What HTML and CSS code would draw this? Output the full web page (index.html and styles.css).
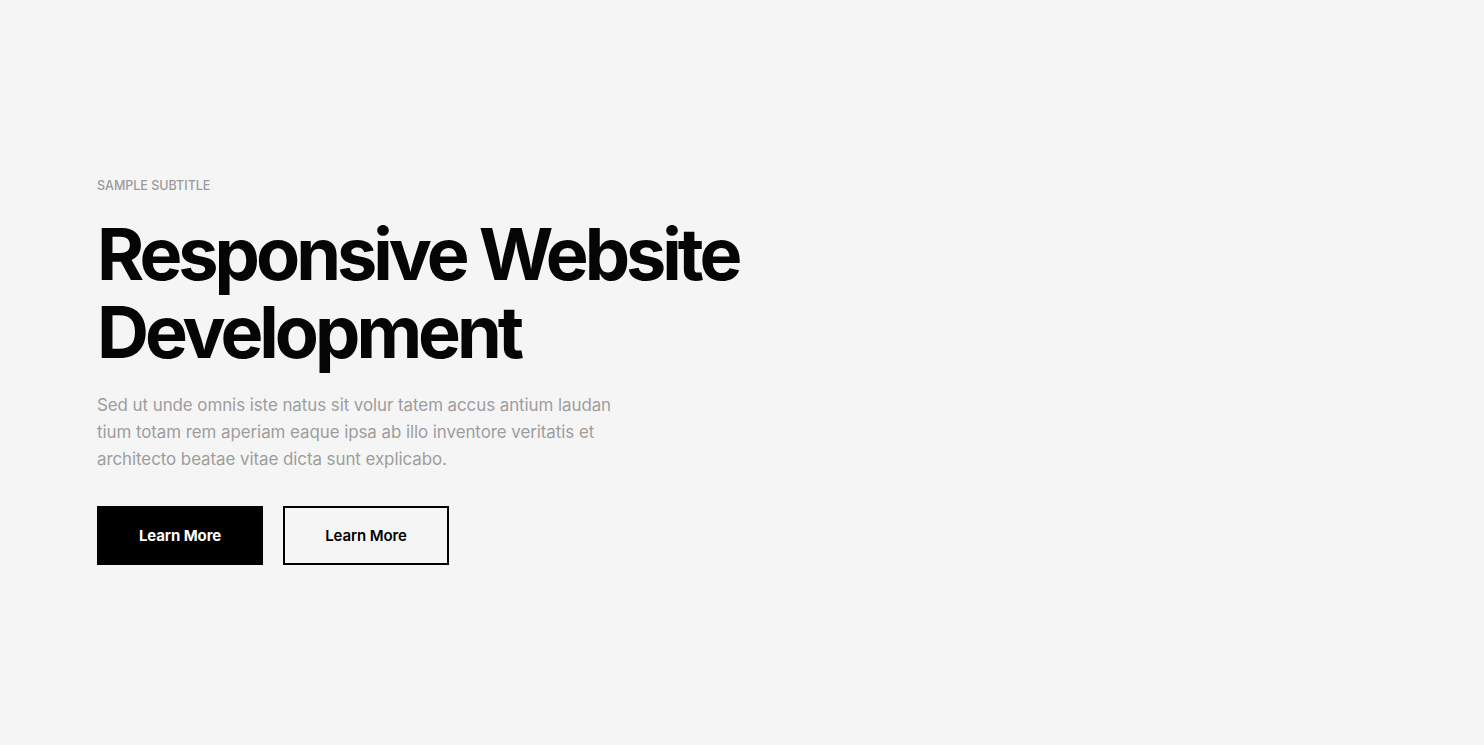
FILE: index.html
```html
<!DOCTYPE html>
<html lang="en">
<head>
<meta charset="utf-8">
<title>Hero</title>
<link rel="stylesheet" href="styles.css">
</head>
<body>
<section class="hero">
  <div class="hero-content">
    <p class="subtitle">SAMPLE SUBTITLE</p>
    <h1 class="title">Responsive Website Development</h1>
    <p class="text">Sed ut unde omnis iste natus sit volur tatem accus antium laudan tium totam rem aperiam eaque ipsa ab illo inventore veritatis et architecto beatae vitae dicta sunt explicabo.</p>
    <div class="actions">
      <a class="btn btn-solid" href="#">Learn More</a>
      <a class="btn btn-outline" href="#">Learn More</a>
    </div>
  </div>
</section>
</body>
</html>
```
FILE: styles.css
```css
html, body {
  margin: 0;
  padding: 0;
  background: #f5f5f5;
}
body {
  font-family: "Inter", "Liberation Sans", sans-serif;
  height: 745px;
  overflow: hidden;
}
.hero {
  padding: 178px 0 0 97px;
}
.hero-content {
  width: 680px;
}
.subtitle {
  margin: 0;
  font-size: 12.5px;
  line-height: 16px;
  font-weight: 500;
  color: #9a9a9a;
  letter-spacing: 0;
}
.title {
  margin: 21px 0 0;
  font-size: 72px;
  line-height: 78px;
  font-weight: 700;
  letter-spacing: -4px;
  color: #050505;
}
.text {
  margin: 21px 0 0;
  width: 540px;
  font-size: 16.9px;
  line-height: 27px;
  color: #9d9d9d;
  letter-spacing: -0.05px;
}
.actions {
  display: flex;
  gap: 20px;
  margin-top: 33px;
}
.btn {
  box-sizing: border-box;
  width: 166px;
  height: 59px;
  display: flex;
  align-items: center;
  justify-content: center;
  font-size: 15px;
  font-weight: 700;
  text-decoration: none;
  letter-spacing: -0.1px;
}
.btn-solid {
  background: #000;
  color: #fff;
}
.btn-outline {
  border: 2px solid #000;
  color: #000;
  font-weight: 600;
}
```
